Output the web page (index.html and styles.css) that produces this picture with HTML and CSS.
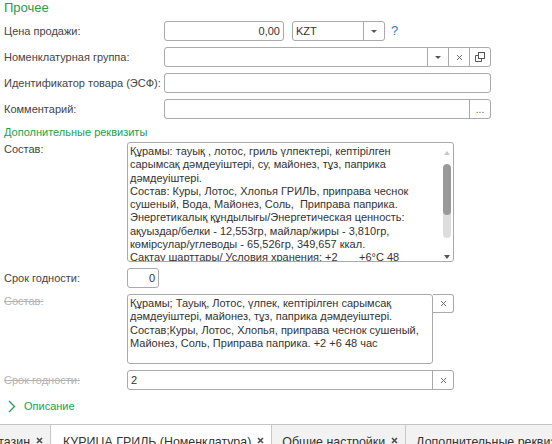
FILE: index.html
```html
<!DOCTYPE html>
<html lang="ru">
<head>
<meta charset="utf-8">
<link rel="stylesheet" href="styles.css">
</head>
<body>
<div class="page">
  <div class="group-title">Прочее</div>

  <div class="row">
    <div class="label">Цена продажи:</div>
    <div class="field price"><span class="val right">0,00</span></div>
    <div class="field currency"><span class="val">KZT</span><span class="btn"><i class="arrow"></i></span></div>
    <span class="help">?</span>
  </div>

  <div class="row">
    <div class="label">Номенклатурная группа:</div>
    <div class="field wide">
      <span class="val"></span>
      <span class="btn"><i class="arrow"></i></span>
      <span class="btn"><svg class="x" width="7" height="7" viewBox="0 0 7 7"><path d="M1 1L6 6M6 1L1 6"/></svg></span>
      <span class="btn"><svg class="copy" width="10" height="10" viewBox="0 0 10 10"><path d="M0.5 3.5V9.5H6.5V7"/><path d="M0.5 3.5H3"/><rect x="3.5" y="0.5" width="6" height="6"/></svg></span>
    </div>
  </div>

  <div class="row">
    <div class="label">Идентификатор товара (ЭСФ):</div>
    <div class="field wide"><span class="val"></span></div>
  </div>

  <div class="row">
    <div class="label">Комментарий:</div>
    <div class="field wide"><span class="val"></span><span class="btn dots">...</span></div>
  </div>

  <div class="sub-title">Дополнительные реквизиты</div>

  <div class="row2 top">
    <div class="label2">Состав:</div>
    <div class="memo memo1">
      <div class="memo-text">
        <div>Құрамы: тауық , лотос, гриль үлпектері, кептірілген</div>
        <div>сарымсақ дәмдеуіштері, су, майонез, тұз, паприка</div>
        <div>дәмдеуіштері.</div>
        <div>Состав: Куры, Лотос, Хлопья ГРИЛЬ, приправа чеснок</div>
        <div>сушеный, Вода, Майонез, Соль,&nbsp; Приправа паприка.</div>
        <div>Энергетикалық құндылығы/Энергетическая ценность:</div>
        <div>ақуыздар/белки - 12,553гр, майлар/жиры - 3,810гр,</div>
        <div>көмірсулар/углеводы - 65,526гр, 349,657 ккал.</div>
        <div>Сақтау шарттары/ Условия хранения: +2&nbsp;&nbsp;&nbsp;&nbsp;&nbsp;&nbsp; +6°C 48</div>
      </div>
      <div class="scrollbar">
        <i class="sb-up"></i>
        <div class="sb-track"><div class="sb-thumb"></div></div>
        <i class="sb-down"></i>
      </div>
    </div>
  </div>

  <div class="row2">
    <div class="label2">Срок годности:</div>
    <div class="field short"><span class="val right">0</span></div>
  </div>

  <div class="row2 top">
    <div class="label2 strike">Состав:</div>
    <div class="memo memo2">
      <div class="memo-text">
        <div>Құрамы; Тауық, Лотос, үлпек, кептірілген сарымсақ</div>
        <div>дәмдеуіштері, майонез, тұз, паприка дәмдеуіштері.</div>
        <div>Состав;Куры, Лотос, Хлопья, приправа чеснок сушеный,</div>
        <div>Майонез, Соль, Приправа паприка. +2 +6 48 час</div>
      </div>
    </div>
    <span class="side-btn"><svg class="x" width="7" height="7" viewBox="0 0 7 7"><path d="M1 1L6 6M6 1L1 6"/></svg></span>
  </div>

  <div class="row2">
    <div class="label2 strike">Срок годности:</div>
    <div class="field wide2"><span class="val">2</span><span class="btn"><svg class="x" width="7" height="7" viewBox="0 0 7 7"><path d="M1 1L6 6M6 1L1 6"/></svg></span></div>
  </div>

  <div class="expander">
    <svg class="chev" width="8" height="13" viewBox="0 0 8 13"><path d="M1 1L6.5 6.5L1 12"/></svg>
    <span>Описание</span>
  </div>
</div>

<div class="tabs">
  <div class="tab first">тазин<svg class="tx" width="7" height="7" viewBox="0 0 7 7"><path d="M1 1L6 6M6 1L1 6"/></svg></div>
  <div class="tab active">КУРИЦА ГРИЛЬ (Номенклатура)<svg class="tx" width="7" height="7" viewBox="0 0 7 7"><path d="M1 1L6 6M6 1L1 6"/></svg></div>
  <div class="tab">Общие настройки<svg class="tx" width="7" height="7" viewBox="0 0 7 7"><path d="M1 1L6 6M6 1L1 6"/></svg></div>
  <div class="tab last">Дополнительные реквизиты</div>
</div>
</body>
</html>
```

FILE: styles.css
```css
html, body {
  margin: 0;
  padding: 0;
}
body {
  width: 552px;
  height: 444px;
  overflow: hidden;
  background: #ffffff;
  font-family: "Liberation Sans", Arial, sans-serif;
  font-size: 11px;
  color: #444444;
}
.page {
  padding: 0 0 0 4px;
}
.group-title {
  font-size: 13px;
  line-height: 16px;
  height: 16px;
  color: #22a04b;
  margin-bottom: 5px;
}
.row {
  display: flex;
  align-items: center;
  height: 20px;
  margin-bottom: 6px;
}
.label {
  width: 160px;
  flex: none;
  white-space: nowrap;
}
.field {
  box-sizing: border-box;
  display: flex;
  height: 20px;
  border: 1px solid #a9a9a9;
  border-radius: 3px;
  background: #fff;
  color: #333;
  flex: none;
}
.val {
  flex: 1;
  padding: 0 3px;
  line-height: 18px;
  white-space: nowrap;
  overflow: hidden;
}
.val.right {
  text-align: right;
}
.btn {
  box-sizing: border-box;
  width: 21px;
  flex: none;
  border-left: 1px solid #a9a9a9;
  display: flex;
  align-items: center;
  justify-content: center;
}
.arrow {
  width: 0;
  height: 0;
  border-left: 3px solid transparent;
  border-right: 3px solid transparent;
  border-top: 3px solid #555;
}
.x path {
  stroke: #6e6e6e;
  stroke-width: 1;
  fill: none;
}
.copy path, .copy rect {
  stroke: #555;
  stroke-width: 1;
  fill: none;
}
.dots {
  color: #555;
  line-height: 12px;
  align-items: flex-end;
  padding-bottom: 2px;
  font-size: 10px;
}
.price {
  width: 120px;
  margin-right: 8px;
}
.currency {
  width: 93px;
}
.help {
  margin-left: 6px;
  color: #2a80d0;
  font-size: 13px;
  line-height: 16px;
}
.wide {
  width: 327px;
}
.sub-title {
  color: #22a04b;
  line-height: 14px;
  height: 14px;
  margin-bottom: 3px;
}
.row2 {
  display: flex;
  align-items: center;
  margin-bottom: 6px;
}
.row2.top {
  align-items: flex-start;
}
.label2 {
  width: 123px;
  flex: none;
  line-height: 14px;
  white-space: nowrap;
}
.label2.strike {
  color: #b3b3b3;
  text-decoration: line-through;
}
.memo {
  box-sizing: border-box;
  border: 1px solid #a9a9a9;
  border-radius: 3px;
  background: #fff;
  color: #333;
  display: flex;
  overflow: hidden;
  flex: none;
}
.memo1 {
  width: 327px;
  height: 120px;
}
.memo2 {
  width: 306px;
  height: 70px;
}
.memo-text {
  flex: 1;
  padding: 2px 0 0 2px;
  line-height: 13.3px;
  white-space: nowrap;
  overflow: hidden;
}
.scrollbar {
  width: 13px;
  flex: none;
  display: flex;
  flex-direction: column;
  align-items: center;
  padding-top: 8px;
  box-sizing: border-box;
}
.sb-up {
  width: 0;
  height: 0;
  border-left: 3px solid transparent;
  border-right: 3px solid transparent;
  border-bottom: 4px solid #c8c8c8;
}
.sb-track {
  width: 8px;
  height: 74px;
  margin-top: 9px;
  border-radius: 4px;
  background: #dddddd;
  overflow: hidden;
}
.sb-thumb {
  height: 51px;
  border-radius: 4px;
  background: #9a9a9a;
}
.sb-down {
  width: 0;
  height: 0;
  margin-top: 17px;
  border-left: 3px solid transparent;
  border-right: 3px solid transparent;
  border-top: 4px solid #555;
}
.side-btn {
  box-sizing: border-box;
  width: 21px;
  height: 19px;
  border: 1px solid #a9a9a9;
  border-left: none;
  border-radius: 0 3px 3px 0;
  display: flex;
  align-items: center;
  justify-content: center;
  background: #fff;
}
.short {
  width: 32px;
}
.wide2 {
  width: 327px;
}
.expander {
  display: flex;
  align-items: center;
  height: 14px;
  margin-top: 9px;
  color: #22a04b;
}
.chev {
  margin-left: 4px;
  margin-right: 8px;
}
.chev path {
  stroke: #22a04b;
  stroke-width: 1.3;
  fill: none;
}
.tabs {
  margin-top: 11px;
  height: 20px;
  border-top: 1px solid #c4c4c4;
  background: #f2f2f2;
  display: flex;
  white-space: nowrap;
  overflow: hidden;
}
.tab {
  flex: none;
  box-sizing: border-box;
  padding: 10px 7px 0 10px;
  font-size: 12.4px;
  line-height: 15px;
  color: #333;
  border-right: 1px solid #c8c8c8;
  display: flex;
  align-items: flex-start;
}
.tab.first {
  width: 51px;
  padding-left: 0;
  justify-content: flex-end;
}
.tab.active {
  background: #fff;
  padding-left: 12px;
}
.tab.last {
  border-right: none;
}
.tx {
  margin-left: 6px;
  margin-top: 2px;
  flex: none;
}
.tx path {
  stroke: #505050;
  stroke-width: 1.7;
  fill: none;
}
```
